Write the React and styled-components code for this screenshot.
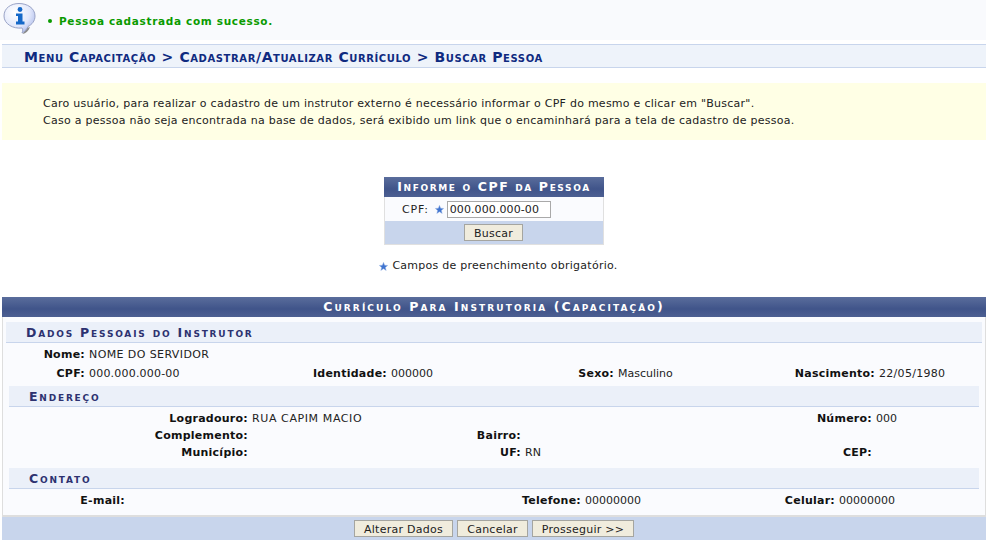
import React from "react"
import styled, { createGlobalStyle } from "styled-components"

const GlobalStyle = createGlobalStyle`
  html, body {
    margin: 0;
    padding: 0;
    background: #fff;
    font-family: "DejaVu Sans", Verdana, sans-serif;
    font-size: 11px;
    letter-spacing: 0.26px;
    color: #222;
  }
`

const Page = styled.div`
  width: 990px;
  height: 545px;
  overflow: hidden;
  padding: 0 4px 0 2px;
  box-sizing: border-box;
`

const MessageBar = styled.div`
  height: 40px;
  margin-left: -2px;
  background: #f9fafd;
  display: flex;
  align-items: flex-start;
  box-sizing: border-box;
  padding: 2px 0 0 2px;
`

const Message = styled.div`
  color: #0a9a00;
  font-weight: bold;
  font-size: 10.5px;
  letter-spacing: 0.67px;
  margin: 13px 0 0 10px;
  display: flex;
  align-items: center;
  gap: 7px;
  &::before {
    content: "";
    width: 4px;
    height: 4px;
    border-radius: 50%;
    background: #0a9a00;
  }
`

const Breadcrumb = styled.h2`
  margin: 4px 0 0;
  height: 24px;
  box-sizing: border-box;
  background: #eef3fa;
  border-top: 1px solid #c8d5ec;
  border-bottom: 1px solid #c8d5ec;
  padding-left: 22px;
  color: #0f2a80;
  font-size: 14px;
  letter-spacing: 0.59px;
  line-height: 24px;
  font-weight: bold;
  font-variant: small-caps;
  white-space: nowrap;
`

const Notice = styled.div`
  margin-top: 15px;
  height: 57px;
  box-sizing: border-box;
  background: #ffffe5;
  padding: 12px 0 0 41px;
  line-height: 17px;
  white-space: nowrap;
`

const FormWrap = styled.div`
  display: flex;
  justify-content: center;
  margin-top: 37px;
`

const FormTable = styled.div`
  width: 220px;
  box-sizing: border-box;
  background: #fafbfe;
  border: 1px solid #e0e0e0;
  border-top: 0;
`

const Caption = styled.div`
  height: 20px;
  background: linear-gradient(#5a6d9c, #40548a 60%, #4c5f92);
  color: #fff;
  font-size: 12.5px;
  line-height: 20px;
  font-weight: bold;
  font-variant: small-caps;
  letter-spacing: 1.6px;
  text-align: center;
  white-space: nowrap;
`

const FormCaption = styled(Caption)`
  margin: 0 -1px;
`

const FormRow = styled.div`
  height: 24px;
  display: flex;
  align-items: center;
  padding-left: 17px;
`

const RowLabel = styled.span`
  margin-right: 6px;
  letter-spacing: 0.8px;
`

const Star = ({ size = 9 }) => (
  <svg width={size} height={size} viewBox="0 0 10 10" style={{ flex: "none" }}>
    <path d="M5 .4 6.3 3.600 9.700 3.800 7.100 6 8 9.400 5 7.500 2 9.400 2.900 6 .3 3.800 3.700 3.600Z" fill="#3f74d0" stroke="#9db8e6" strokeWidth=".5" />
  </svg>
)

const TextBox = styled.input`
  width: 104px;
  height: 17px;
  box-sizing: border-box;
  border: 1px solid #a9a9a9;
  padding: 0 0 0 2px;
  margin-left: 3px;
  font-family: inherit;
  font-size: 11px;
  letter-spacing: 0.1px;
  color: #222;
  background: #fff;
`

const ButtonBar = styled.div`
  background: #c8d5ec;
  display: flex;
  justify-content: center;
  align-items: center;
  gap: ${(p) => p.$gap || 0}px;
  height: ${(p) => p.$height}px;
`

const FormButtons = styled(ButtonBar)`
  padding-right: 1px;
`

const Button = styled.button`
  width: ${(p) => p.$width}px;
  height: 17px;
  padding: 1px 0 0;
  box-sizing: border-box;
  border: 1px solid #a5a5a0;
  background: #f0ecdd;
  color: #222;
  font-family: inherit;
  font-size: 11px;
  letter-spacing: 0.26px;
  line-height: 15px;
  white-space: nowrap;
`

const Legend = styled.div`
  display: flex;
  justify-content: center;
  align-items: center;
  gap: 4px;
  margin-top: 14px;
  padding-left: 9px;
  line-height: 14px;
`

const Panel = styled.div`
  margin-top: 24px;
  height: 243px;
  background: #fafbfe;
  border-left: 1px solid #dedede;
  border-right: 1px solid #dedede;
  box-sizing: border-box;
  display: flex;
  flex-direction: column;
`

const PanelTitle = styled(Caption)`
  margin: 0 -1px;
  letter-spacing: 2.1px;
`

const SectionTitle = styled.div`
  height: 21px;
  box-sizing: border-box;
  margin: ${(p) => p.$top}px ${(p) => p.$inset}px 0;
  padding-left: 20px;
  background: #ebf0f9;
  border-bottom: 1px solid #c8d5ec;
  color: #2d3270;
  font-size: 12.5px;
  line-height: 22px;
  font-weight: bold;
  font-variant: small-caps;
  letter-spacing: 1.8px;
`

const Rows = styled.div`
  display: grid;
  grid-template-columns: ${(p) => p.$cols};
  grid-auto-rows: ${(p) => p.$rowHeight}px;
  margin-top: ${(p) => p.$top}px;
  align-items: center;
  white-space: nowrap;
`

const Label = styled.span`
  font-weight: bold;
  text-align: right;
  color: #111;
  padding-right: 4px;
  letter-spacing: 0.25px;
`

const Value = styled.span`
  color: #222;
  letter-spacing: ${(p) => p.$spacing ?? 0.2}px;
  ${(p) => p.$wide && "grid-column: 2 / -1;"}
`

const Footer = styled(ButtonBar)`
  margin: auto -1px 0;
  border-top: 2px solid #dedede;
  box-sizing: border-box;
`

const App = () => (
  <Page>
    <GlobalStyle />
    <MessageBar>
      <svg width="36" height="34" viewBox="0 0 36 34">
        <defs>
          <radialGradient id="bubble" cx="35%" cy="30%" r="80%">
            <stop offset="0" stopColor="#ffffff" />
            <stop offset="0.6" stopColor="#e2e8fb" />
            <stop offset="1" stopColor="#aab8ea" />
          </radialGradient>
        </defs>
        <path d="M22 27C22.500 29 22 30 20.500 32C24 31.500 26.500 29 28 25Z" fill="#8b8b8b" />
        <path
          d="M17 1.500C25 1.500 33 6 33 14C33 19 30 22.500 26 24.500C25 27 23 29.500 20 31C21 28.500 21 27 20 26C11 27 2 22 2 14C2 6 9 1.500 17 1.500Z"
          fill="url(#bubble)"
          stroke="#9aa3c6"
          strokeWidth="1"
        />
        <circle cx="18" cy="7.500" r="2.400" fill="#1568c8" />
        <path d="M14 11.500H20.500V19.500H22.500V22.500H14V19.500H16V14H14Z" fill="#1568c8" />
      </svg>
      <Message>Pessoa cadastrada com sucesso.</Message>
    </MessageBar>

    <Breadcrumb>Menu Capacitação &gt; Cadastrar/Atualizar Currículo &gt; Buscar Pessoa</Breadcrumb>

    <Notice>
      Caro usuário, para realizar o cadastro de um instrutor externo é necessário informar o CPF do mesmo e clicar em "Buscar".
      <br />
      Caso a pessoa não seja encontrada na base de dados, será exibido um link que o encaminhará para a tela de cadastro de pessoa.
    </Notice>

    <FormWrap>
      <FormTable>
        <FormCaption>Informe o CPF da Pessoa</FormCaption>
        <FormRow>
          <RowLabel>CPF:</RowLabel>
          <Star />
          <TextBox defaultValue="000.000.000-00" />
        </FormRow>
        <FormButtons $height={23}>
          <Button $width={59}>Buscar</Button>
        </FormButtons>
      </FormTable>
    </FormWrap>

    <Legend>
      <Star /> Campos de preenchimento obrigatório.
    </Legend>

    <Panel>
      <PanelTitle>Currículo Para Instrutoria (Capacitação)</PanelTitle>

      <SectionTitle $top={5} $inset={3}>Dados Pessoais do Instrutor</SectionTitle>
      <Rows $cols="86px 220px 82px 149px 78px 162px 99px 1fr" $rowHeight={19} $top={2}>
        <Label>Nome:</Label>
        <Value $wide $spacing={0.4}>NOME DO SERVIDOR</Value>
        <Label>CPF:</Label>
        <Value>000.000.000-00</Value>
        <Label>Identidade:</Label>
        <Value $spacing={0}>000000</Value>
        <Label>Sexo:</Label>
        <Value $spacing={0}>Masculino</Value>
        <Label>Nascimento:</Label>
        <Value $spacing={0.3}>22/05/1980</Value>
      </Rows>

      <SectionTitle $top={3} $inset={6}>Endereço</SectionTitle>
      <Rows $cols="249px 188px 85px 255px 96px 1fr" $rowHeight={17} $top={3}>
        <Label>Logradouro:</Label>
        <Value $spacing={0.6}>RUA CAPIM MACIO</Value>
        <span />
        <span />
        <Label>Número:</Label>
        <Value $spacing={0}>000</Value>
        <Label>Complemento:</Label>
        <span />
        <Label>Bairro:</Label>
        <span />
        <span />
        <span />
        <Label>Município:</Label>
        <span />
        <Label>UF:</Label>
        <Value>RN</Value>
        <Label>CEP:</Label>
        <span />
      </Rows>

      <SectionTitle $top={7} $inset={6}>Contato</SectionTitle>
      <Rows $cols="126px 361px 95px 175px 79px 1fr" $rowHeight={17} $top={3}>
        <Label>E-mail:</Label>
        <span />
        <Label>Telefone:</Label>
        <Value $spacing={0}>00000000</Value>
        <Label>Celular:</Label>
        <Value $spacing={0}>00000000</Value>
      </Rows>

      <Footer $height={25} $gap={4}>
        <Button $width={99}>Alterar Dados</Button>
        <Button $width={71}>Cancelar</Button>
        <Button $width={102}>Prosseguir &gt;&gt;</Button>
      </Footer>
    </Panel>
  </Page>
)

export default App
